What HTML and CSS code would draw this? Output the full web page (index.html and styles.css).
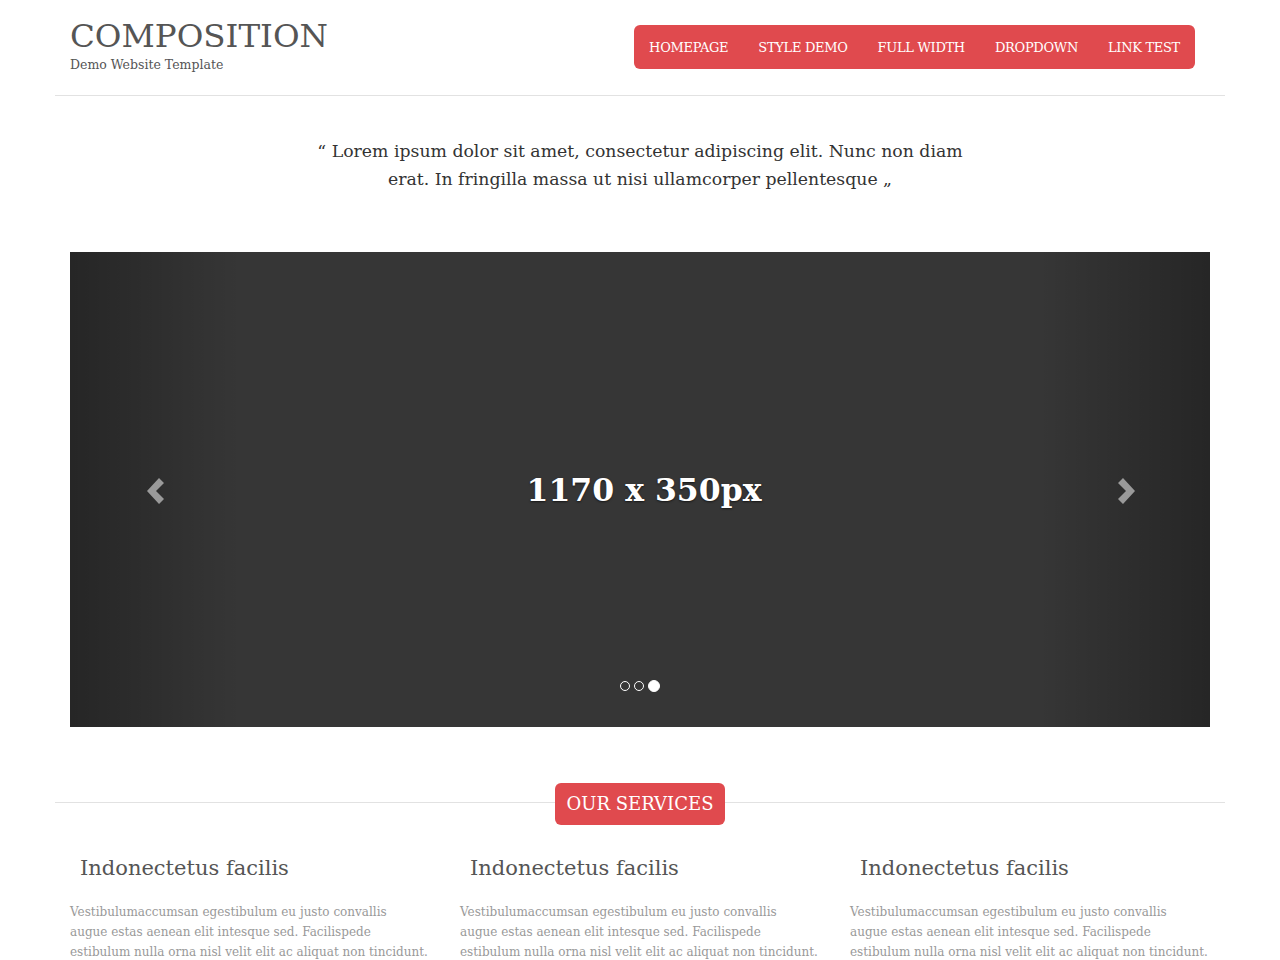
FILE: index.html
```html
<!DOCTYPE html>
<html lang="en">
<head>
<meta charset="utf-8">
<title>Composition</title>
<link rel="stylesheet" href="styles.css">
</head>
<body>
<div class="container">
  <header class="header">
    <div class="brand">
      <h1 class="logo">COMPOSITION</h1>
      <p class="tagline">Demo Website Template</p>
    </div>
    <nav class="nav">
      <a href="#">HOMEPAGE</a>
      <a href="#">STYLE DEMO</a>
      <a href="#">FULL WIDTH</a>
      <a href="#">DROPDOWN</a>
      <a href="#">LINK TEST</a>
    </nav>
  </header>

  <section class="intro">
    <p class="quote">“ Lorem ipsum dolor sit amet, consectetur adipiscing elit. Nunc non diam erat. In fringilla massa ut nisi ullamcorper pellentesque „</p>
  </section>

  <section class="slider">
    <div class="shade shade-left"></div>
    <div class="shade shade-right"></div>
    <a class="ctrl ctrl-left" href="#" aria-label="Previous">
      <svg width="24" height="30" viewBox="0 0 24 30"><path d="M16 2 L4 15 L16 28 L21 23 L13 15 L21 7 Z" fill="#9a9a9a"/></svg>
    </a>
    <div class="slide-label">1170 x 350px</div>
    <a class="ctrl ctrl-right" href="#" aria-label="Next">
      <svg width="24" height="30" viewBox="0 0 24 30"><path d="M8 2 L20 15 L8 28 L3 23 L11 15 L3 7 Z" fill="#9a9a9a"/></svg>
    </a>
    <ol class="dots">
      <li></li>
      <li></li>
      <li class="active"></li>
    </ol>
  </section>

  <section class="services">
    <div class="services-title"><span>OUR SERVICES</span></div>
    <div class="cols">
      <div class="col">
        <h3>Indonectetus facilis</h3>
        <p>Vestibulumaccumsan egestibulum eu justo convallis<br>augue estas aenean elit intesque sed. Facilispede<br>estibulum nulla orna nisl velit elit ac aliquat non tincidunt.</p>
      </div>
      <div class="col">
        <h3>Indonectetus facilis</h3>
        <p>Vestibulumaccumsan egestibulum eu justo convallis<br>augue estas aenean elit intesque sed. Facilispede<br>estibulum nulla orna nisl velit elit ac aliquat non tincidunt.</p>
      </div>
      <div class="col">
        <h3>Indonectetus facilis</h3>
        <p>Vestibulumaccumsan egestibulum eu justo convallis<br>augue estas aenean elit intesque sed. Facilispede<br>estibulum nulla orna nisl velit elit ac aliquat non tincidunt.</p>
      </div>
    </div>
  </section>
</div>
</body>
</html>
```

FILE: styles.css
```css
* { box-sizing: border-box; }
html, body { margin: 0; padding: 0; background: #fff; }
body {
  font-family: "DejaVu Serif", Georgia, serif;
  color: #333;
  overflow: hidden;
}
.container {
  width: 1170px;
  margin: 0 auto;
}
.header {
  display: flex;
  justify-content: space-between;
  align-items: flex-start;
  padding: 16px 30px 0 15px;
  height: 96px;
  border-bottom: 1px solid #e2e2e2;
}
.logo {
  margin: 0;
  font-weight: normal;
  font-size: 32.5px;
  line-height: 40px;
  color: #555;
}
.tagline {
  margin: 1px 0 0;
  font-size: 12.5px;
  color: #555;
}
.nav {
  margin-top: 9px;
  display: flex;
  background: #e04a4e;
  border-radius: 6px;
  height: 44px;
  align-items: center;
}
.nav a {
  color: #fff;
  text-decoration: none;
  font-size: 13px;
  padding: 0 15px;
  letter-spacing: -0.3px;
  line-height: 47px;
}
.intro {
  display: flex;
  justify-content: center;
  padding: 41px 0 59px;
}
.quote {
  margin: 0;
  max-width: 680px;
  text-align: center;
  font-size: 17.3px;
  line-height: 28px;
  color: #333;
}
.slider {
  position: relative;
  margin: 0 15px;
  height: 475px;
  background: #363636;
  display: flex;
  align-items: center;
  justify-content: center;
  overflow: hidden;
}
.shade {
  position: absolute;
  top: 0;
  bottom: 0;
  width: 171px;
}
.shade-left { left: 0; background: linear-gradient(to right, rgba(0,0,0,0.3), rgba(0,0,0,0)); }
.shade-right { right: 0; background: linear-gradient(to left, rgba(0,0,0,0.3), rgba(0,0,0,0)); }
.ctrl {
  position: absolute;
  top: 224px;
  display: block;
  width: 24px;
  height: 30px;
}
.ctrl-left { left: 73px; }
.ctrl-right { right: 71px; }
.slide-label {
  position: relative;
  color: #fff;
  font-size: 31.5px;
  font-weight: bold;
  text-shadow: 0 1px 2px rgba(0,0,0,0.6);
  margin-top: -1px;
  padding-left: 8px;
}
.dots {
  position: absolute;
  left: 0;
  right: 0;
  bottom: 35px;
  margin: 0;
  padding: 0;
  list-style: none;
  display: flex;
  justify-content: center;
  align-items: center;
  gap: 4px;
}
.dots li {
  width: 10px;
  height: 10px;
  border: 1px solid #fff;
  border-radius: 50%;
}
.dots li.active {
  width: 12px;
  height: 12px;
  background: #fff;
}
.services {
  padding-top: 56px;
}
.services-title {
  position: relative;
  text-align: center;
  height: 42px;
}
.services-title::before {
  content: "";
  position: absolute;
  left: 0;
  right: 0;
  top: 19px;
  border-top: 1px solid #e2e2e2;
}
.services-title span {
  position: relative;
  display: inline-block;
  background: #e04a4e;
  color: #fff;
  font-size: 18px;
  line-height: 42px;
  height: 42px;
  padding: 0 12px;
  border-radius: 6px;
}
.cols {
  display: grid;
  grid-template-columns: repeat(3, 1fr);
  padding-top: 27px;
}
.col {
  padding: 0 15px;
}
.col h3 {
  margin: 0 0 0 10px;
  font-weight: normal;
  font-size: 21px;
  line-height: 32px;
  color: #555;
}
.col p {
  margin: 18px 0 0;
  font-size: 12px;
  line-height: 20px;
  color: #999;
  white-space: nowrap;
}
```
